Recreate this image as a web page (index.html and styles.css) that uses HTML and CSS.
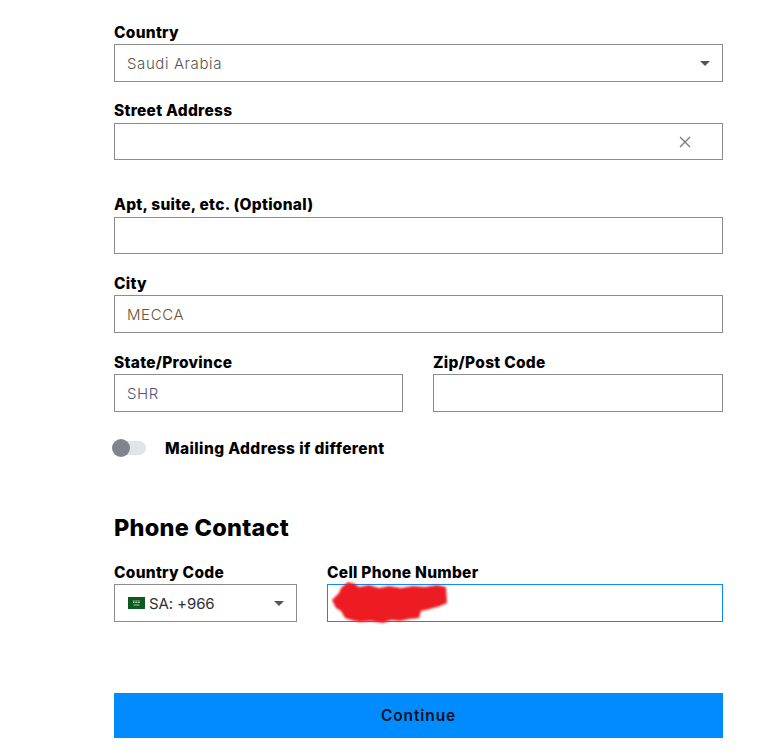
FILE: index.html
```html
<!DOCTYPE html>
<html lang="en">
<head>
    <meta charset="UTF-8">
    <meta name="viewport" content="width=device-width, initial-scale=1.0">
    <title>Address and Phone Contact</title>
    <link rel="stylesheet" href="styles.css">
</head>
<body>
    <form class="address-form">
        <div class="field field-country">
            <label>Country</label>
            <div class="box box-38">
                <span class="value value-country">Saudi Arabia</span>
                <svg class="caret" width="10" height="5" viewBox="0 0 10 5"><path d="M0 0h10L5 5z" fill="#555"/></svg>
            </div>
        </div>
        <div class="field field-street">
            <label>Street Address</label>
            <div class="box box-37">
                <input type="text">
                <svg class="clear" width="12" height="12" viewBox="0 0 12 12"><path d="M1 1l10 10M11 1L1 11" stroke="#777" stroke-width="1.3" fill="none"/></svg>
            </div>
        </div>
        <div class="field field-apt">
            <label>Apt, suite, etc. (Optional)</label>
            <div class="box box-37"><input type="text"></div>
        </div>
        <div class="field field-city">
            <label>City</label>
            <div class="box box-38"><span class="value value-city">MECCA</span></div>
        </div>
        <div class="row-state">
            <div class="field">
                <label>State/Province</label>
                <div class="box box-38"><span class="value value-state">SHR</span></div>
            </div>
            <div class="field">
                <label>Zip/Post Code</label>
                <div class="box box-38"><input type="text"></div>
            </div>
        </div>
        <div class="mailing-toggle">
            <span class="toggle"><span class="toggle-knob"></span></span>
            <span class="toggle-label">Mailing Address if different</span>
        </div>
        <h2>Phone Contact</h2>
        <div class="row-phone">
            <div class="field">
                <label>Country Code</label>
                <div class="box box-38">
                    <span class="code">
                        <svg class="flag" width="17" height="12" viewBox="0 0 17 12">
                            <rect width="17" height="12" fill="#0b5a1e"/>
                            <path d="M5 4h7M5 5.5h7" stroke="#fff" stroke-width="1" stroke-dasharray="1 .6" opacity=".85"/>
                            <path d="M5.5 8h6" stroke="#fff" stroke-width=".8" opacity=".8"/>
                        </svg>
                        SA: +966
                    </span>
                    <svg class="caret" width="10" height="5" viewBox="0 0 10 5"><path d="M0 0h10L5 5z" fill="#555"/></svg>
                </div>
            </div>
            <div class="field">
                <label>Cell Phone Number</label>
                <div class="box box-38 box-focus">
                    <svg class="scribble" width="132" height="50" viewBox="0 0 132 50">
                        <defs><filter id="soft"><feGaussianBlur stdDeviation="1.2"/></filter></defs>
                        <path filter="url(#soft)" fill="#ed1c24" d="M11 21 L18 14 L20 9 L27 3 L34 5 L38 8 L48 6 L58 9 L68 7 L80 9 L92 7 L104 8 L116 6 L125 8 L126 24 L119 27 L109 30 L100 32 L98 39 L88 40 L79 42 L70 41 L62 44 L50 42 L39 43 L30 41 L24 39 L20 32 L15 29 Z"/>
                    </svg>
                </div>
            </div>
        </div>
        <button type="button" class="continue">Continue</button>
    </form>
</body>
</html>
```

FILE: styles.css
```css
* {
    box-sizing: border-box;
}
body {
    margin: 0;
    background: white;
    color: #000;
    font-family: 'Inter', 'Liberation Sans', sans-serif;
}
.address-form {
    width: 609px;
    margin-left: 114px;
    padding-top: 24px;
}
label {
    display: block;
    height: 20px;
    line-height: 18px;
    font-size: 15.5px;
    font-weight: 800;
    letter-spacing: 0.27px;
}
.box {
    display: flex;
    align-items: center;
    justify-content: space-between;
    border: 1px solid #8c8c8c;
    padding: 0 13px 0 12px;
    background: white;
}
.box-38 {
    height: 38px;
}
.box-37 {
    height: 37px;
}
.box input {
    flex: 1;
    min-width: 0;
    border: none;
    outline: none;
    background: none;
}
.box-focus {
    position: relative;
    border-color: #0a8bff;
}
.value {
    font-size: 15px;
    font-weight: 300;
    letter-spacing: 0.6px;
}
.value-country {
    color: #555;
}
.value-city {
    color: #6e5233;
}
.value-state {
    color: #4c5578;
}
.caret {
    flex: none;
    margin-right: -1px;
}
.clear {
    flex: none;
    margin-right: 18px;
}
.field-street {
    margin-top: 20px;
}
.field-street label {
    height: 21px;
}
.field-apt {
    margin-top: 36px;
}
.field-apt label {
    height: 21px;
}
.field-city {
    margin-top: 21px;
}
.row-state {
    display: grid;
    grid-template-columns: 289px 290px;
    gap: 30px;
    margin-top: 21px;
}
.mailing-toggle {
    display: flex;
    align-items: center;
    gap: 19px;
    margin-top: 25px;
    height: 22px;
}
.toggle {
    position: relative;
    display: block;
    width: 32px;
    height: 14px;
    border-radius: 7px;
    background: #e3e4e8;
}
.toggle-knob {
    position: absolute;
    left: -2px;
    top: -2px;
    width: 18px;
    height: 18px;
    border-radius: 50%;
    background: #81838f;
}
.toggle-label {
    font-size: 15.5px;
    font-weight: 800;
    letter-spacing: 0.4px;
}
h2 {
    margin: 54px 0 0;
    font-size: 23.5px;
    line-height: 30px;
    font-weight: 800;
    letter-spacing: 0.25px;
}
.row-phone {
    display: grid;
    grid-template-columns: 183px 396px;
    gap: 30px;
    margin-top: 21px;
}
.code {
    display: flex;
    align-items: center;
    gap: 4px;
    margin-left: 1px;
    font-size: 15px;
    letter-spacing: -0.1px;
    color: #2b3036;
}
.scribble {
    position: absolute;
    left: -7px;
    top: -6px;
}
.continue {
    display: block;
    width: 100%;
    height: 45px;
    margin-top: 71px;
    border: none;
    background: #008cff;
    color: #0b1020;
    font-family: inherit;
    font-size: 15.5px;
    font-weight: 600;
    letter-spacing: 0.9px;
}
```
